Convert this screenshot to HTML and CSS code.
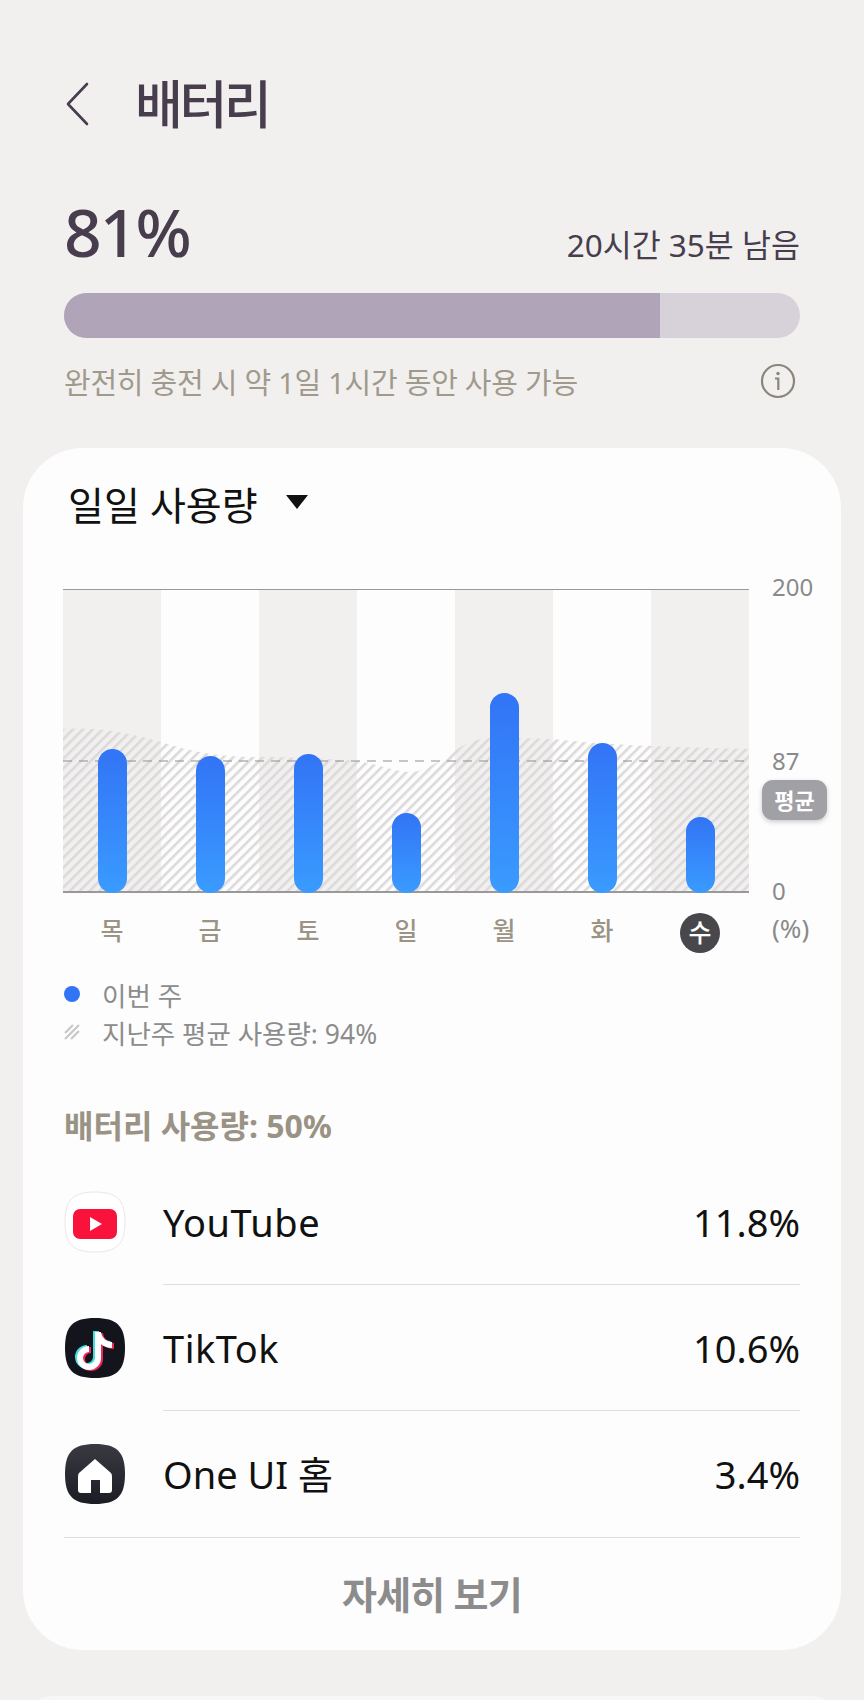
FILE: index.html
```html
<!DOCTYPE html>
<html lang="ko">

<head>
	<meta charset="UTF-8">
	<meta name="viewport" content="width=device-width, initial-scale=1.0">
	<title>배터리</title>
	<link rel="stylesheet" href="styles.css">
</head>

<body>
	<header class="top-bar">
		<svg class="back" width="24" height="44" viewBox="0 0 24 44">
			<path d="M22 2 L3 22 L22 42" fill="none" stroke="#473d4d" stroke-width="2.6" stroke-linecap="round" stroke-linejoin="round" />
		</svg>
		<h1>배터리</h1>
	</header>

	<section class="summary">
		<div class="level-row">
			<div class="level">81%</div>
			<div class="remaining">20시간 35분 남음</div>
		</div>
		<div class="level-bar">
			<div class="level-fill"></div>
		</div>
		<div class="note-row">
			<span class="note">완전히 충전 시 약 1일 1시간 동안 사용 가능</span>
			<svg width="36" height="36" viewBox="0 0 36 36">
				<circle cx="18" cy="18" r="16" fill="none" stroke="#8a867c" stroke-width="2.2" />
				<circle cx="18" cy="10.5" r="1.7" fill="#8a867c" />
				<path d="M15 15.5 H18.3 V27" fill="none" stroke="#8a867c" stroke-width="2.2" />
			</svg>
		</div>
	</section>

	<main class="card">
		<div class="card-title">
			<span>일일 사용량</span>
			<span class="caret"></span>
		</div>

		<div class="chart">
			<div class="plot">
				<div class="col"></div>
				<div class="col alt"></div>
				<div class="col"></div>
				<div class="col alt"></div>
				<div class="col"></div>
				<div class="col alt"></div>
				<div class="col"></div>
				<!-- last week area, hatched -->
				<svg class="hatch" width="686" height="302" viewBox="0 0 686 302">
					<defs>
						<pattern id="lines" width="7" height="7" patternUnits="userSpaceOnUse" patternTransform="rotate(45)">
							<rect width="2.6" height="7" fill="#dcd9db" />
						</pattern>
					</defs>
					<path d="M0 140 C30 138 60 142 98 153 C130 163 155 168 196 168 C230 168 265 170 294 172 C320 176 335 184 350 183 C370 180 385 164 405 154 C425 146 445 149 490 150 C530 155 600 158 686 160 V302 H0 Z" fill="url(#lines)" />
					<line x1="0" y1="172" x2="686" y2="172" stroke="#8f8f8f" stroke-width="1.2" stroke-dasharray="9 7" />
				</svg>
				<div class="bars">
					<div class="slot"><div class="bar" style="height: 144px"></div></div>
					<div class="slot"><div class="bar" style="height: 137px"></div></div>
					<div class="slot"><div class="bar" style="height: 139px"></div></div>
					<div class="slot"><div class="bar" style="height: 80px"></div></div>
					<div class="slot"><div class="bar" style="height: 200px"></div></div>
					<div class="slot"><div class="bar" style="height: 150px"></div></div>
					<div class="slot"><div class="bar" style="height: 76px"></div></div>
				</div>
				<span class="tick tick-200">200</span>
				<span class="tick tick-87">87</span>
				<span class="avg-badge">평균</span>
				<span class="tick tick-0">0</span>
			</div>
			<div class="days">
				<span>목</span>
				<span>금</span>
				<span>토</span>
				<span>일</span>
				<span>월</span>
				<span>화</span>
				<span class="today">수</span>
				<span class="unit">(%)</span>
			</div>
		</div>

		<div class="legend">
			<div class="legend-row">
				<span class="dot"></span>
				<span>이번 주</span>
			</div>
			<div class="legend-row">
				<svg class="legend-hatch" width="16" height="16" viewBox="0 0 16 16">
					<path d="M1 9 L9 1 M1 15 L15 1 M7 15 L15 7" stroke="#c9c7c7" stroke-width="2.2" fill="none" />
				</svg>
				<span>지난주 평균 사용량: 94%</span>
			</div>
		</div>

		<h2 class="usage-title">배터리 사용량: 50%</h2>

		<div class="apps">
			<div class="app">
				<svg class="app-icon" width="62" height="62" viewBox="-1 -1 62 62">
					<path d="M30 0 C52 0 60 8 60 30 S52 60 30 60 S0 52 0 30 S8 0 30 0 Z" fill="#ffffff" stroke="#e9e8e8" stroke-width="1" />
					<rect x="8" y="17" width="44" height="30" rx="7" fill="#f8123c" />
					<path d="M25 25 L37 32 L25 39 Z" fill="#ffffff" />
				</svg>
				<div class="app-text">
					<span class="app-name">YouTube</span>
					<span>11.8%</span>
				</div>
			</div>
			<div class="app">
				<svg class="app-icon" width="62" height="62" viewBox="-1 -1 62 62">
					<path d="M30 0 C52 0 60 8 60 30 S52 60 30 60 S0 52 0 30 S8 0 30 0 Z" fill="#14141c" />
					<g fill="none" stroke-width="6">
						<path d="M31 13 V39 a9 9 0 1 1 -9 -9 M31 14 c1 7 7 12 14 12" stroke="#3fe0e0" />
						<path d="M35 15 V41 a9 9 0 1 1 -9 -9 M35 16 c1 7 7 12 14 12" stroke="#f0285a" />
						<path d="M33 14 V40 a9 9 0 1 1 -9 -9 M33 15 c1 7 7 12 14 12" stroke="#ffffff" />
					</g>
				</svg>
				<div class="app-text">
					<span class="app-name">TikTok</span>
					<span>10.6%</span>
				</div>
			</div>
			<div class="app last">
				<svg class="app-icon" width="62" height="62" viewBox="-1 -1 62 62">
					<defs>
						<linearGradient id="homeBg" x1="0" y1="0" x2="0" y2="1">
							<stop offset="0" stop-color="#3a3a42" />
							<stop offset="1" stop-color="#1c1c24" />
						</linearGradient>
					</defs>
					<path d="M30 0 C52 0 60 8 60 30 S52 60 30 60 S0 52 0 30 S8 0 30 0 Z" fill="url(#homeBg)" />
					<path d="M30 15 L46 29 Q47 30 47 33 V46 Q47 49 44 49 H35 V36 H26 V49 H16 Q13 49 13 46 V33 Q13 30 14 29 Z" fill="#ffffff" />
				</svg>
				<div class="app-text">
					<span class="app-name">One UI 홈</span>
					<span>3.4%</span>
				</div>
			</div>
		</div>

		<div class="more">자세히 보기</div>
	</main>
	<div class="next-card"></div>
</body>

</html>
```

FILE: styles.css
```css
body {
	font-family: "Noto Sans", "Noto Sans CJK KR", sans-serif;
	margin: 0;
	background-color: #f2f0ef;
	height: 1700px;
	overflow: hidden;
}

.top-bar {
	display: flex;
	align-items: center;
	height: 80px;
	padding: 64px 0 0 65px;
}

.top-bar h1 {
	margin: 0 0 0 46px;
	font-size: 52px;
	line-height: 80px;
	font-weight: 500;
	letter-spacing: -3.4px;
	color: #473d4d;
}

.summary {
	padding: 0 64px;
}

.level-row {
	display: flex;
	justify-content: space-between;
	align-items: baseline;
	height: 70px;
	margin-top: 52px;
}

.level {
	font-size: 66px;
	line-height: 70px;
	font-weight: 500;
	letter-spacing: -2px;
	color: #473d4d;
}

.remaining {
	font-size: 31.5px;
	color: #473d4d;
}

.level-bar {
	height: 45px;
	margin-top: 27px;
	border-radius: 23px;
	background-color: #d7d1d9;
	overflow: hidden;
}

.level-fill {
	width: 81%;
	height: 100%;
	background-color: #b0a4b8;
}

.note-row {
	display: flex;
	justify-content: space-between;
	align-items: center;
	height: 42px;
	margin-top: 22px;
	padding-right: 4px;
}

.note {
	font-size: 29px;
	letter-spacing: -0.25px;
	color: #a09a8c;
}

.card {
	margin: 46px 23px 0;
	padding: 32px 41px 0;
	height: 1170px;
	border-radius: 60px;
	background-color: #fdfdfd;
}

.card-title {
	display: flex;
	align-items: center;
	height: 46px;
	padding-left: 4px;
	font-size: 39px;
	color: #111111;
}

.caret {
	width: 0;
	height: 0;
	margin-left: 28px;
	margin-top: -2px;
	border-left: 11px solid transparent;
	border-right: 11px solid transparent;
	border-top: 14px solid #111111;
}

.chart {
	width: 686px;
	margin-top: 63px;
	margin-left: -1px;
}

.plot {
	position: relative;
	display: flex;
	height: 304px;
	border-top: 1px solid #999999;
	border-bottom: 2px solid #999999;
	box-sizing: border-box;
}

.col {
	flex: 1;
	background-color: #f2f0ef;
}

.col.alt {
	background-color: #fdfdfd;
}

.hatch {
	position: absolute;
	left: 0;
	top: -1px;
}

.bars {
	position: absolute;
	left: 0;
	right: 0;
	bottom: -2px;
	top: 0;
	display: flex;
}

.slot {
	flex: 1;
	display: flex;
	justify-content: center;
	align-items: flex-end;
}

.bar {
	width: 29px;
	border-radius: 15px;
	background: linear-gradient(#3274f6, #3a9bff);
}

.tick {
	position: absolute;
	left: 709px;
	font-size: 24px;
	line-height: 30px;
	color: #8a8a8a;
}

.tick-200 {
	top: -18px;
}

.tick-87 {
	top: 156px;
}

.tick-0 {
	top: 286px;
}

.avg-badge {
	position: absolute;
	left: 699px;
	top: 190px;
	width: 65px;
	height: 40px;
	border-radius: 11px;
	background-color: #a0a0a5;
	box-shadow: 0 2px 5px rgba(0, 0, 0, 0.2);
	color: white;
	font-size: 22px;
	font-weight: 700;
	line-height: 40px;
	text-align: center;
}

.days {
	position: relative;
	display: grid;
	grid-template-columns: repeat(7, 1fr);
	height: 40px;
	margin-top: 20px;
	font-size: 25px;
	font-weight: 500;
	line-height: 34px;
	text-align: center;
	color: #9b9484;
}

.days .today {
	justify-self: center;
	width: 40px;
	height: 40px;
	border-radius: 50%;
	background-color: #48484c;
	color: white;
	line-height: 38px;
}

.days .unit {
	position: absolute;
	left: 709px;
	top: -2px;
	font-size: 26px;
	font-weight: 400;
	color: #8a8a8a;
}

.legend {
	margin-top: 22px;
}

.legend-row {
	display: flex;
	align-items: center;
	height: 38px;
	font-size: 26.5px;
	color: #8c8c8c;
}

.dot {
	width: 16px;
	height: 16px;
	border-radius: 50%;
	background-color: #3274f6;
}

.dot + span,
.legend-hatch + span {
	margin-left: 22px;
}

.usage-title {
	margin: 53px 0 0;
	font-size: 32px;
	line-height: 44px;
	font-weight: 700;
	color: #9a9385;
}

.apps {
	margin-top: 43px;
}

.app {
	display: flex;
	height: 126px;
}

.app-icon {
	flex: none;
}

.app-text {
	flex: 1;
	display: flex;
	justify-content: space-between;
	margin-left: 37px;
	height: 93px;
	border-bottom: 1px solid #dedede;
	font-size: 38px;
	line-height: 62px;
	color: #111111;
}

.app-name {
	letter-spacing: 0.5px;
}

.app.last .app-text {
	border-bottom: none;
}

.app.last .app-name {
	letter-spacing: 0;
}

.app.last {
	height: 94px;
	border-bottom: 1px solid #dedede;
}

.more {
	height: 112px;
	font-size: 38px;
	font-weight: 700;
	letter-spacing: -0.8px;
	line-height: 112px;
	text-align: center;
	color: #8c8c8c;
}

.next-card {
	margin: 46px 23px 0;
	height: 60px;
	border-radius: 30px 30px 0 0;
	background-color: #f8f7f7;
}
```
